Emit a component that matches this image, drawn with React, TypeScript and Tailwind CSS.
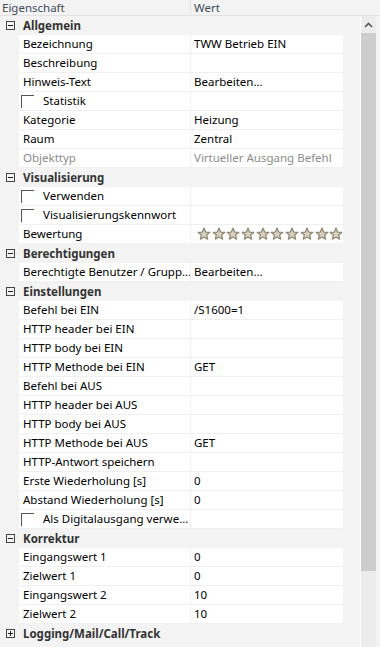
import React from 'react';

type Row =
  | { kind: 'group'; label: string; open?: boolean }
  | { kind: 'prop'; label: string; value?: string; check?: boolean; muted?: boolean; stars?: boolean };

const rows: Row[] = [
  { kind: 'group', label: 'Allgemein', open: true },
  { kind: 'prop', label: 'Bezeichnung', value: 'TWW Betrieb EIN' },
  { kind: 'prop', label: 'Beschreibung' },
  { kind: 'prop', label: 'Hinweis-Text', value: 'Bearbeiten...' },
  { kind: 'prop', label: 'Statistik', check: true },
  { kind: 'prop', label: 'Kategorie', value: 'Heizung' },
  { kind: 'prop', label: 'Raum', value: 'Zentral' },
  { kind: 'prop', label: 'Objekttyp', value: 'Virtueller Ausgang Befehl', muted: true },
  { kind: 'group', label: 'Visualisierung', open: true },
  { kind: 'prop', label: 'Verwenden', check: true },
  { kind: 'prop', label: 'Visualisierungskennwort', check: true },
  { kind: 'prop', label: 'Bewertung', stars: true },
  { kind: 'group', label: 'Berechtigungen', open: true },
  { kind: 'prop', label: 'Berechtigte Benutzer / Grupp...', value: 'Bearbeiten...' },
  { kind: 'group', label: 'Einstellungen', open: true },
  { kind: 'prop', label: 'Befehl bei EIN', value: '/S1600=1' },
  { kind: 'prop', label: 'HTTP header bei EIN' },
  { kind: 'prop', label: 'HTTP body bei EIN' },
  { kind: 'prop', label: 'HTTP Methode bei EIN', value: 'GET' },
  { kind: 'prop', label: 'Befehl bei AUS' },
  { kind: 'prop', label: 'HTTP header bei AUS' },
  { kind: 'prop', label: 'HTTP body bei AUS' },
  { kind: 'prop', label: 'HTTP Methode bei AUS', value: 'GET' },
  { kind: 'prop', label: 'HTTP-Antwort speichern' },
  { kind: 'prop', label: 'Erste Wiederholung [s]', value: '0' },
  { kind: 'prop', label: 'Abstand Wiederholung [s]', value: '0' },
  { kind: 'prop', label: 'Als Digitalausgang verwe...', check: true },
  { kind: 'group', label: 'Korrektur', open: true },
  { kind: 'prop', label: 'Eingangswert 1', value: '0' },
  { kind: 'prop', label: 'Zielwert 1', value: '0' },
  { kind: 'prop', label: 'Eingangswert 2', value: '10' },
  { kind: 'prop', label: 'Zielwert 2', value: '10' },
  { kind: 'group', label: 'Logging/Mail/Call/Track', open: false },
];

function Expander({ open }: { open?: boolean }) {
  return (
    <svg width="9" height="9" viewBox="0 0 9 9" className="shrink-0">
      <rect x="0.5" y="0.5" width="8" height="8" fill="none" stroke="#444" />
      <line x1="2" y1="4.5" x2="7" y2="4.5" stroke="#222" />
      {!open && <line x1="4.5" y1="2" x2="4.5" y2="7" stroke="#222" />}
    </svg>
  );
}

function Checkbox() {
  return <div className="w-[13px] h-[13px] shrink-0 border-t border-l border-[#555]" />;
}

function Star() {
  return (
    <svg width="14" height="14" viewBox="0 0 24 24">
      <path
        d="M12 2l2.9 6.6 7.1.6-5.4 4.7 1.6 7-6.2-3.7-6.2 3.7 1.6-7L2 9.2l7.1-.6z"
        fill="#d6d1c2"
        stroke="#8f8770"
        strokeWidth="2.2"
        strokeLinejoin="round"
      />
    </svg>
  );
}

export default function App() {
  return (
    <div
      className="w-[380px] h-[647px] bg-[#f3f3f3] overflow-hidden flex flex-col text-[11.5px] text-black"
      style={{ fontFamily: '"Noto Sans", "Open Sans", sans-serif' }}
    >
      <div className="h-[16px] shrink-0 flex border-b border-[#e3e3e3] text-[#404a58] leading-[15px]">
        <div className="w-[191px] pl-[2px] border-r border-[#e3e3e3]">Eigenschaft</div>
        <div className="pl-[3px]">Wert</div>
      </div>

      <div className="flex flex-1 min-h-0">
        <div className="w-[361px] shrink-0 border-r border-white">
          {rows.map((r, i) =>
            r.kind === 'group' ? (
              <div key={i} className="h-[19px] flex items-center">
                <div className="w-[19px] flex justify-center pl-[1px]">
                  <Expander open={r.open} />
                </div>
                <span className="pl-[4px] font-bold text-[#333]">{r.label}</span>
              </div>
            ) : (
              <div key={i} className="h-[19px] flex">
                <div className="w-[19px] shrink-0" />
                <div className="w-[324px] flex bg-white border-b border-[#f0f0f0]">
                  <div className="w-[172px] shrink-0 flex items-center border-r border-[#f0f0f0] pl-[4px] overflow-hidden whitespace-nowrap">
                    {r.check && (
                      <div className="flex items-center gap-[9px] -ml-[2px]">
                        <Checkbox />
                        <span>{r.label}</span>
                      </div>
                    )}
                    {!r.check && <span className={r.muted ? 'text-[#8d8d8d]' : ''}>{r.label}</span>}
                  </div>
                  <div className="flex-1 flex items-center pl-[3px] overflow-hidden whitespace-nowrap">
                    {r.stars ? (
                      <div className="flex gap-[0.7px] pl-[3px]">
                        {Array.from({ length: 10 }).map((_, k) => (
                          <Star key={k} />
                        ))}
                      </div>
                    ) : (
                      <span className={r.muted ? 'text-[#8d8d8d]' : ''}>{r.value}</span>
                    )}
                  </div>
                </div>
              </div>
            )
          )}
        </div>

        <div className="w-[15px] shrink-0 bg-[#ececec] flex flex-col">
          <div className="h-[17px] flex items-center justify-center">
            <svg width="9" height="6" viewBox="0 0 9 6">
              <path d="M1 5l3.5-3.5L8 5" fill="none" stroke="#555" strokeWidth="1.6" />
            </svg>
          </div>
          <div className="h-[538px] bg-[#cdcdcd]" />
        </div>
      </div>
    </div>
  );
}
